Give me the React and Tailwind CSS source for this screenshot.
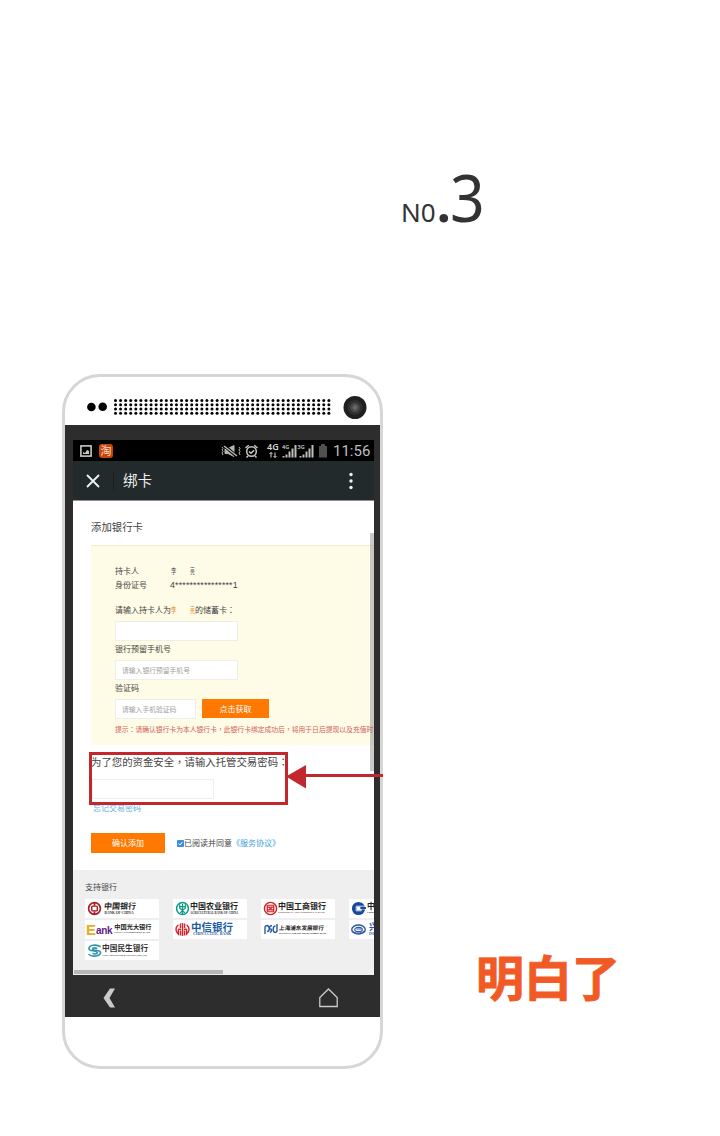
import React from "react";

const dotColumns = Array.from({ length: 43 }, (_, i) => 1.5 + i * 5.08);
const dotRows = [1.6, 5.8, 10, 14.2];

function PhoneTop() {
  return (
    <div className="flex h-12 shrink-0 items-start">
      <svg className="ml-[21px] mt-[24px] h-3 w-[22px]" viewBox="0 0 22 12">
        <circle cx="5.4" cy="6" r="4.3" />
        <circle cx="16.7" cy="5.8" r="4.3" />
      </svg>
      <svg className="ml-[6px] mt-[22px] h-[16px] w-[217px] shrink-0" viewBox="0 0 217 16">
        {dotColumns.map((x) => dotRows.map((y) => <circle key={x + "-" + y} cx={x} cy={y} r="1.5" />))}
      </svg>
      <svg className="ml-[12px] mt-[18px] size-6 shrink-0" viewBox="0 0 24 24">
        <circle cx="12" cy="12.500" r="11.5" fill="#1f1f1f" />
        <circle cx="12" cy="12.500" r="7.5" fill="#303030" />
        <circle cx="12" cy="12.500" r="4.8" fill="#484848" />
        <circle cx="12" cy="12.500" r="2.4" fill="#666" />
      </svg>
    </div>
  );
}

function StatusBar() {
  return (
    <div className="flex h-[21px] shrink-0 items-center bg-black text-[#d5d5d5]">
      <svg className="ml-[7px] h-3 w-3" viewBox="0 0 12 12">
        <rect x="0.9" y="0.9" width="10.2" height="10.2" fill="none" stroke="#c8c8c8" strokeWidth="1.6" />
        <path d="M3 9V7l2 1 2-3 2 1v3z" fill="#c8c8c8" />
      </svg>
      <div className="ml-[7px] flex size-[14px] items-center justify-center rounded-[3px] bg-[#c8440c] text-[11px] leading-none text-[#ffd9c2]">淘</div>
      <svg className="ml-[107px] h-4 w-[150px]" viewBox="0 0 150 16" fill="none">
        <g stroke="#b5b5b5" strokeWidth="1">
          <path d="M2 4l1 1.5-1 1.5 1 1.5-1 1.5 1 2M19 4l1 1.5-1 1.5 1 1.5-1 1.5 1 2" />
          <path d="M5 5.500h3l6-3v11l-6-3H5z" fill="#b5b5b5" />
          <path d="M4 2.5l13 11" stroke="#000" strokeWidth="3" />
          <path d="M4 3l13 10" strokeWidth="1.5" />
        </g>
        <g stroke="#c8c8c8" strokeWidth="1.5">
          <circle cx="31.500" cy="8.5" r="4.800" />
          <path d="M25.5 5l3.300-2.800M37.500 5l-3.300-2.800M29 8.500l2 1.800 3-3M28 13l-1.500 1.500M35 13l1.500 1.500" />
        </g>
        <g fill="#d5d5d5" fontFamily="Noto Sans, sans-serif" fontWeight="600">
          <text x="47" y="7.4" fontSize="9">4G</text>
          <text x="62" y="6" fontSize="5.5">4G</text>
          <text x="77.500" y="6" fontSize="5.5">3G</text>
        </g>
        <path d="M51 9.500v5M49.500 11l1.500-1.500 1.500 1.500M55 9.500v5M53.500 13l1.500 1.500 1.500-1.500" stroke="#d5d5d5" />
        <g fill="#bdbdbd">
          <path d="M62.500 13h2v1.500h-2zM65.500 11.500h2v3h-2zM68.500 8.500h2v6h-2zM71.500 5.500h2v9h-2zM74.500 2h2v12.500h-2z" />
          <path d="M79.500 13h2v1.500h-2zM82.500 11.500h2v3h-2zM85.500 8.500h2v6h-2zM88.500 5.500h2v9h-2zM91.500 2h2v12.500h-2z" />
        </g>
        <path d="M101 1h4v2h2v11.500h-8V3h2z" fill="#505050" />
      </svg>
      <div className="-ml-[37px] pt-[2px] font-[Roboto] text-[15px] leading-none text-[#bdbdbd]">11:56</div>
    </div>
  );
}

function TitleBar() {
  return (
    <div className="flex h-[40px] shrink-0 items-center border-b border-[#8f8f8f] bg-[#222a2c] text-white">
      <svg className="ml-[13px] size-[14px]" viewBox="0 0 14 14">
        <path d="M1 1l12 12M13 1L1 13" stroke="#f2f2f2" strokeWidth="1.800" />
      </svg>
      <div className="ml-[13px] h-5 w-px bg-[#191f21]" />
      <div className="ml-[9px] grow text-[14.500px] leading-none text-[#eee]">绑卡</div>
      <svg className="mr-[21px] h-[18px] w-1" viewBox="0 0 4 18" fill="#f4f4f4">
        <circle cx="2" cy="2.500" r="1.700" />
        <circle cx="2" cy="9" r="1.700" />
        <circle cx="2" cy="15.500" r="1.700" />
      </svg>
    </div>
  );
}

// Full-width punctuation centred in its cell
function P({ children }) {
  return <span className="font-['Noto_Sans_CJK_TC',sans-serif]">{children}</span>;
}

function MaskedName({ color }) {
  return (
    <span className={"flex w-[25px] " + color}>
      <span className="w-[19px] shrink-0">
        <span className="inline-block w-[8px] origin-left scale-x-[.65]">李</span>
      </span>
      <span className="inline-block w-[8px] shrink-0 origin-left scale-x-[.6]">亮</span>
    </span>
  );
}

function CardForm() {
  return (
    <div className="mt-[11px] flex h-[200px] shrink-0 flex-col border-t border-[#f3ecd2] bg-[#fefbe6] pl-6 text-[8px] leading-[14px] whitespace-nowrap text-[#444]">
      <div className="mt-[18px] flex h-[14px]">
        <span className="w-[56px]">持卡人</span>
        <MaskedName color="text-[#555]" />
      </div>
      <div className="flex h-[14px]">
        <span className="w-[55px]">身份证号</span>
        <span className="font-[Arial,'Liberation_Sans',sans-serif] text-[8.800px] tracking-[0.180px]">4****************1</span>
      </div>
      <div className="mt-[11px] flex h-[14px]">
        <span>请输入持卡人为</span>
        <MaskedName color="text-[#e8901c]" />
        <span className="-ml-px">的储蓄卡<P>：</P></span>
      </div>
      <div className="mt-1 h-5 w-[123px] border border-[#efefea] bg-white" />
      <div className="mt-px h-[14px]">银行预留手机号</div>
      <div className="mt-1 h-5 w-[123px] border border-[#efefea] bg-white pl-[6px] text-[6.800px] leading-[18px] text-[#a0a0a0]">请输入银行预留手机号</div>
      <div className="mt-px h-[14px]">验证码</div>
      <div className="mt-1 flex h-5 gap-[6px]">
        <div className="w-[81px] border border-[#efefea] bg-white pl-[6px] text-[6.800px] leading-[18px] text-[#a0a0a0]">请输入手机验证码</div>
        <div className="h-[19px] w-[67px] bg-[#ff7800] text-center leading-[19px] text-white">点击获取</div>
      </div>
      <div className="mt-[4px] h-[13px] text-[6.800px] leading-[13px] text-[#d35d5d]">
        提示<P>：</P>请确认银行卡为本人银行卡<P>，</P>此银行卡绑定成功后<P>，</P>将用于日后提现以及充值时
      </div>
    </div>
  );
}

function Logo({ kind }) {
  const common = { viewBox: "0 0 16 16", fill: "none", className: "size-[15px] shrink-0" };
  if (kind === "boc")
    return (
      <svg {...common} stroke="#a51c24">
        <circle cx="8" cy="8" r="6.300" strokeWidth="1.800" />
        <path d="M8 2v3M8 11v3" strokeWidth="1.800" />
        <rect x="5" y="5.500" width="6" height="5" rx="1" strokeWidth="1.500" />
      </svg>
    );
  if (kind === "abc")
    return (
      <svg {...common} stroke="#0c9b84">
        <circle cx="8" cy="8" r="6.300" strokeWidth="1.600" />
        <path d="M8 3v11M5 3.500v4l3 2.500 3-2.500v-4M5.500 6h5M5.500 12.500L8 10.500l2.500 2" strokeWidth="1.300" />
      </svg>
    );
  if (kind === "icbc")
    return (
      <svg {...common} stroke="#d01c26">
        <circle cx="8" cy="8" r="6.500" strokeWidth="1.500" />
        <path d="M4.500 4.500h7M4.500 11.500h7M5 6.500h2.300v3H5M11 6.500H8.700v3H11M4.500 4.500v7M11.500 4.500v7" strokeWidth="1.200" />
      </svg>
    );
  if (kind === "ccb")
    return (
      <svg {...common}>
        <circle cx="8" cy="8" r="7" fill="#154a9c" />
        <path d="M5.500 5.500h10.500M5.500 5.500v5H11V8.500h5" stroke="#fff" strokeWidth="0.800" />
        <path d="M6 6h4.500v4H6z" fill="#fff" />
        <path d="M10 6.500h6v2h-6z" fill="#154a9c" />
      </svg>
    );
  if (kind === "citic")
    return (
      <svg {...common} stroke="#d5252c" strokeWidth="1.500">
        <path d="M8 1v14M5.800 1.500v5M10.200 1.500v5M5.800 9v5.500M10.200 9v5.500M3.600 3C.2 6 .2 10 3.600 13V7.700M12.400 3c3.400 3 3.400 7 0 10V7.700M3.500 7.700h3M9.500 7.700h3" />
      </svg>
    );
  if (kind === "cmbc")
    return (
      <svg {...common} strokeWidth="1.700">
        <path d="M14.500 4C10 1 2 2 2 6c0 3 9 1.500 9 4.500C11 12 8 12 6 11" stroke="#2a9c96" />
        <path d="M1.500 12c4 3.500 13 2 13-2 0-3-8.500-1-8.500-4C6 4.800 9 5 11 5.800" stroke="#3c8eb8" />
      </svg>
    );
  return (
    <svg {...common} stroke="#2d55a5">
      <ellipse cx="8" cy="8" rx="7.200" ry="4.800" strokeWidth="1.500" />
      <ellipse cx="8" cy="8" rx="4" ry="2.300" strokeWidth="1.300" />
      <path d="M6 7.500h5M1 9.500c4 3 9 3 13 0" />
    </svg>
  );
}

function Bank({ kind, name, en, nameClass = "text-[8px] text-[#222]", enClass = "text-[2.800px] text-[#333]", gap = "ml-[3px]" }) {
  return (
    <div className="flex h-[18.500px] w-[74px] shrink-0 items-center overflow-hidden bg-white pl-[2px] whitespace-nowrap">
      <Logo kind={kind} />
      <div className={"flex shrink-0 flex-col items-start " + gap}>
        <div className={"leading-[9px] font-bold " + nameClass}>{name}</div>
        <div className={"mt-px font-['Liberation_Serif',serif] leading-[4px] font-bold " + enClass}>{en}</div>
      </div>
    </div>
  );
}

function Banks() {
  return (
    <div className="flex h-[105px] shrink-0 flex-col overflow-hidden bg-[#efefef]">
      <div className="mt-[10px] ml-3 h-[14px] shrink-0 text-[8px] leading-[14px] text-[#444]">支持银行</div>
      <div className="mt-[5px] ml-3 grid shrink-0 grid-cols-[74px_74px_74px_74px] gap-x-[14px] gap-y-[2.500px]">
        <Bank kind="boc" name="中国银行" en="BANK OF CHINA" nameClass="text-[8px] -skew-x-6 text-[#222]" enClass="ml-px text-[3.600px] text-[#333]" gap="ml-[1.500px]" />
        <Bank kind="abc" name="中国农业银行" en="AGRICULTURAL BANK OF CHINA" enClass="text-[2.950px] text-[#333]" gap="ml-0" />
        <Bank kind="icbc" name="中国工商银行" en="INDUSTRIAL AND COMMERCIAL BANK" enClass="text-[2.450px] text-[#8a2020]" gap="ml-0" />
        <Bank kind="ccb" name="中国建设银行" en="China Construction Bank" gap="ml-[1px]" />
        <div className="flex h-[18.500px] w-[74px] items-center overflow-hidden bg-white pl-px whitespace-nowrap">
          <div className="flex items-end">
            <span className="font-[Arial,'Liberation_Sans',sans-serif] text-[15px] leading-[13px] font-bold text-[#e7ad20]">E</span>
            <span className="font-[Arial,'Liberation_Sans',sans-serif] text-[10px] leading-[10px] font-bold tracking-[-0.300px] text-[#5d2382]">ank</span>
          </div>
          <div className="ml-[2px] flex flex-col items-start">
            <div className="text-[6.200px] leading-[8px] font-bold text-[#222]">中国光大银行</div>
            <div className="font-['Liberation_Serif',serif] text-[2.700px] leading-[4px] font-bold text-[#333]">CHINA EVERBRIGHT BANK</div>
          </div>
        </div>
        <Bank kind="citic" name="中信银行" en="CHINA CITIC BANK" nameClass="text-[10.500px] text-[#1c5ca5]" enClass="ml-[2px] text-[4px] text-[#1c5ca5]" gap="ml-[1px]" />
        <div className="flex h-[18.500px] w-[74px] items-center overflow-hidden bg-white pl-[3px] whitespace-nowrap">
          <svg className="h-[12px] w-[14px] shrink-0" viewBox="0 0 14 12" fill="none" stroke="#285ba3" strokeWidth="1.400">
            <path d="M1 11V4.500C1 3 2 2.500 3.500 2.500M3 8.500c3 0 3-5.500 0-6M8 2.500C5 3 5 6 6.500 6S8 8.500 6 9.500M13 1v6.500c0 1.500-1 2-2.500 2M11.500 3C8.500 3 8.500 9 11 9.500" />
          </svg>
          <div className="ml-px flex flex-col">
            <div className="-skew-x-6 text-[5.600px] leading-[8px] font-bold text-[#222]">上海浦东发展银行</div>
            <div className="font-['Liberation_Sans',sans-serif] text-[2.250px] leading-[3px] font-bold text-[#333]">SHANGHAI PUDONG DEVELOPMENT BANK</div>
          </div>
        </div>
        <Bank kind="cib" name="兴业银行" en="INDUSTRIAL BANK" nameClass="text-[9px] text-[#2d55a5]" enClass="text-[3.500px] text-[#2d55a5]" />
        <Bank kind="cmbc" name="中国民生银行" en="CHINA MINSHENG BANKING CORP.,LTD" nameClass="text-[7.700px] text-[#333]" enClass="text-[2.300px] text-[#333]" gap="ml-0" />
      </div>
      <div className="mt-auto mb-px ml-px h-[4px] w-[149px] shrink-0 bg-[#b7b7b7]" />
    </div>
  );
}

function Screen() {
  return (
    <div className="relative ml-2 flex h-[535px] w-[301px] flex-col overflow-hidden bg-white">
      <StatusBar />
      <TitleBar />
      <div className="flex h-[369px] shrink-0 flex-col pl-[18px] whitespace-nowrap">
        <div className="mt-[19px] h-[14px] shrink-0 text-[10.400px] leading-[14px] text-[#444]">添加银行卡</div>
        <CardForm />
        <div className="mt-[10px] h-[14px] shrink-0 text-[10.400px] leading-[14px] text-[#444]">为了您的资金安全<P>，</P>请输入托管交易密码<P>：</P></div>
        <div className="mt-[10px] ml-px h-5 w-[122px] shrink-0 border border-[#efefef]" />
        <div className="mt-[2px] ml-[2px] h-[14px] shrink-0 text-[8px] leading-[14px] text-[#62b0dc]">忘记交易密码</div>
        <div className="mt-[18px] flex h-5 shrink-0 items-center text-[8px] text-[#444]">
          <div className="h-5 w-[74px] bg-[#ff7800] text-center leading-[19px] text-white">确认添加</div>
          <svg className="ml-3 size-[7px]" viewBox="0 0 7 7">
            <rect width="7" height="7" rx="1" fill="#3b8de0" />
            <path d="M1.500 3.500L3 5l2.500-3" fill="none" stroke="#fff" />
          </svg>
          <span className="pb-px leading-[18px]">已阅读并同意</span>
          <span className="pb-px leading-[18px] text-[#3f9fdd]">《服务协议》</span>
        </div>
      </div>
      <Banks />
      <div className="absolute top-[93px] right-0 h-[238px] w-[4px] bg-[#77777766]" />
    </div>
  );
}

function NavKeys() {
  return (
    <div className="flex grow items-center justify-between pt-[4px] pr-[42px] pl-[38px]">
      <svg className="h-[20px] w-[13px]" viewBox="0 0 13 20">
        <path d="M7 .5h5L6.500 10l5.500 9.500H7L.5 10z" fill="#cbcbcb" />
      </svg>
      <svg className="h-[20px] w-[19px]" viewBox="0 0 19 20">
        <path d="M.8 9.500L9.500 1l8.700 8.500v9H.8z" fill="none" stroke="#cbcbcb" strokeWidth="1.300" />
      </svg>
    </div>
  );
}

export default function App() {
  return (
    <div className="relative h-[1136px] w-[720px] overflow-hidden bg-white font-['Noto_Sans_CJK_SC',sans-serif]">
      <div className="flex h-[374px] items-start pt-[146px] pl-[401px] font-['Noto_Sans'] text-[#333]">
        <div className="flex h-[100px] items-baseline leading-[100px]">
          <span className="text-[26px]">N0</span>
          <span className="ml-[1px] text-[50px] font-bold">.</span>
          <span className="-ml-[1px] origin-left scale-x-[.92] text-[66px]">3</span>
        </div>
      </div>
      <div className="flex">
        <div className="ml-[62px] flex h-[695px] w-[321px] shrink-0 flex-col rounded-[38px] border-[3px] border-[#d6d6d6]">
          <PhoneTop />
          <div className="flex h-[592px] shrink-0 flex-col bg-[#2d2d2d] pt-[15px]">
            <Screen />
            <NavKeys />
          </div>
        </div>
        <div className="mt-[566px] ml-[93px] h-[70px] text-[48px] leading-[70px] font-bold text-[#f15a24] [-webkit-text-stroke:0.8px_#f15a24]">明白了</div>
      </div>
      <div className="absolute top-[752px] left-[89px] h-[53px] w-[199px] border-[3px] border-[#c1272d]" />
      <svg className="absolute top-[764px] left-[286px] h-[25px] w-[97px]" viewBox="0 0 97 25">
        <path d="M0 12.500L20 1v9h77v3H20v11.500z" fill="#c1272d" />
      </svg>
    </div>
  );
}
